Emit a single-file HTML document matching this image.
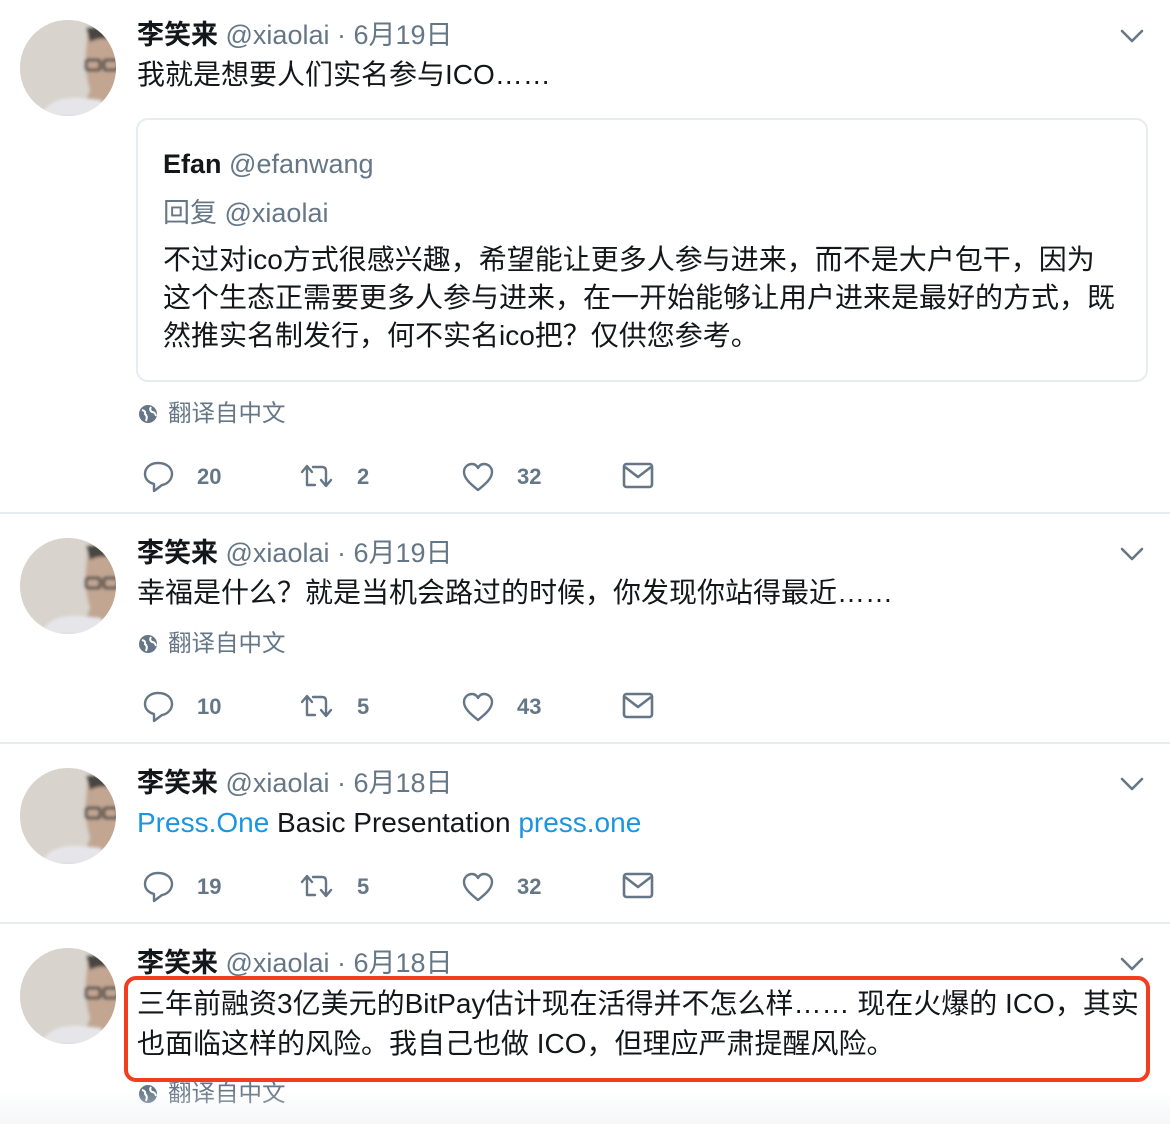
<!DOCTYPE html>
<html><head><meta charset="utf-8"><style>
*{margin:0;padding:0;box-sizing:border-box}
body{width:1170px;height:1124px;background:#fff;position:relative;overflow:hidden;font-family:"Liberation Sans","Noto Sans CJK SC",sans-serif;color:#14171a}
.a{position:absolute;white-space:nowrap}
.av{position:absolute;left:20px;width:96px;height:96px;border-radius:50%;overflow:hidden;background:#d9d4cd}
.hd{font-size:27px;line-height:30px}
.hd b{font-weight:bold;color:#14171a}
.hd span{color:#657786}
.tx{font-size:28px;line-height:38px}
.g{color:#657786}
.sep{position:absolute;left:0;width:1170px;height:2px;background:#e6ecf0}
.cnt{position:absolute;font-size:22px;font-weight:bold;color:#657786;line-height:24px}
.lnk{color:#1b95e0}
.tr{font-size:23.5px;line-height:30px}
</style></head><body>

<svg width="0" height="0" style="position:absolute"><defs>
<filter id="bl"><feGaussianBlur stdDeviation="1.5"/></filter>
<g id="face" filter="url(#bl)">
<rect width="96" height="96" fill="#d8d3cc"/>
<path d="M68 10 Q90 6 100 20 L100 96 L60 96 L70 70 Q64 50 66 30 Z" fill="#c2a692"/>
<path d="M66 8 Q86 4 100 14 L100 24 Q84 14 70 22 Z" fill="#4a4441"/>
<rect x="66" y="40" width="14" height="10" rx="2" fill="none" stroke="#4a4644" stroke-width="3"/>
<rect x="84" y="40" width="14" height="10" rx="2" fill="none" stroke="#4a4644" stroke-width="3"/>
<path d="M20 96 Q30 76 60 78 L80 80 L96 96 Z" fill="#e6e6ea"/>
</g>
<g id="globe"><circle cx="10" cy="10" r="9" fill="#657786"/><path d="M4 6 Q8 7 7 10 Q10 12 8 17 M13 3 Q11 6 14 8 Q17 8 18 12" stroke="#fff" stroke-width="2" fill="none"/></g>
<g id="reply"><path d="M16 3 C8 3 3 8 3 14 C3 20 8 23 12 24 L12 31 L20 25 C26 24 30 19 30 14 C30 8 25 3 16 3 Z" fill="none" stroke="#657786" stroke-width="2.4" stroke-linejoin="round"/></g>
<g id="rt"><path d="M7 26 L7 8 M2 13 L7 7 L12 13 M7 26 L15 26 M13 8 L22 8 Q26 8 26 12 L26 26 M21 21 L26 27 L31 21" fill="none" stroke="#657786" stroke-width="2.4" stroke-linecap="round" stroke-linejoin="round"/></g>
<g id="heart"><path d="M16 29 C10 24 2 18 2 11 C2 6 6 3 10 3 C13 3 15 5 16 7 C17 5 19 3 22 3 C26 3 30 6 30 11 C30 18 22 24 16 29 Z" fill="none" stroke="#657786" stroke-width="2.4" stroke-linejoin="round"/></g>
<g id="mail"><rect x="2" y="5" width="28" height="23" rx="2.5" fill="none" stroke="#657786" stroke-width="2.6"/><path d="M3 8 L16 18 L29 8" fill="none" stroke="#657786" stroke-width="2.6" stroke-linejoin="round"/></g>
<g id="chev"><path d="M2 2 L12 12 L22 2" fill="none" stroke="#657786" stroke-width="2.6" stroke-linecap="round" stroke-linejoin="round"/></g>
</defs></svg>

<!-- Tweet 1 -->
<div class="av" style="top:20px"><svg width="96" height="96"><use href="#face"/></svg></div>
<div class="a hd" style="left:137px;top:20px"><b>李笑来</b> <span>@xiaolai · 6月19日</span></div>
<svg class="a" style="left:1120px;top:29px" width="24" height="14"><use href="#chev"/></svg>
<div class="a tx" style="left:137px;top:56px">我就是想要人们实名参与ICO……</div>
<div class="a" style="left:136px;top:118px;width:1012px;height:264px;border:2px solid #e6ecf0;border-radius:12px"></div>
<div class="a hd" style="left:163px;top:149px"><b>Efan</b> <span>@efanwang</span></div>
<div class="a g" style="left:163px;top:194px;font-size:27px;line-height:38px">回复 @xiaolai</div>
<div class="a tx" style="left:163px;top:241px;line-height:38px">不过对ico方式很感兴趣，希望能让更多人参与进来，而不是大户包干，因为<br>这个生态正需要更多人参与进来，在一开始能够让用户进来是最好的方式，既<br>然推实名制发行，何不实名ico把？仅供您参考。</div>
<svg class="a" style="left:138px;top:404px" width="20" height="20"><use href="#globe"/></svg>
<div class="a g tr" style="left:168px;top:398px">翻译自中文</div>
<svg class="a" style="left:142px;top:460px" width="33" height="34"><use href="#reply"/></svg>
<div class="cnt" style="left:197px;top:465px">20</div>
<svg class="a" style="left:300px;top:459px" width="34" height="34"><use href="#rt"/></svg>
<div class="cnt" style="left:357px;top:465px">2</div>
<svg class="a" style="left:462px;top:461px" width="32" height="32"><use href="#heart"/></svg>
<div class="cnt" style="left:517px;top:465px">32</div>
<svg class="a" style="left:622px;top:459px" width="32" height="32"><use href="#mail"/></svg>
<div class="sep" style="top:512px"></div>

<!-- Tweet 2 -->
<div class="av" style="top:538px"><svg width="96" height="96"><use href="#face"/></svg></div>
<div class="a hd" style="left:137px;top:538px"><b>李笑来</b> <span>@xiaolai · 6月19日</span></div>
<svg class="a" style="left:1120px;top:547px" width="24" height="14"><use href="#chev"/></svg>
<div class="a tx" style="left:137px;top:574px">幸福是什么？就是当机会路过的时候，你发现你站得最近……</div>
<svg class="a" style="left:138px;top:634px" width="20" height="20"><use href="#globe"/></svg>
<div class="a g tr" style="left:168px;top:628px">翻译自中文</div>
<svg class="a" style="left:142px;top:690px" width="33" height="34"><use href="#reply"/></svg>
<div class="cnt" style="left:197px;top:695px">10</div>
<svg class="a" style="left:300px;top:689px" width="34" height="34"><use href="#rt"/></svg>
<div class="cnt" style="left:357px;top:695px">5</div>
<svg class="a" style="left:462px;top:691px" width="32" height="32"><use href="#heart"/></svg>
<div class="cnt" style="left:517px;top:695px">43</div>
<svg class="a" style="left:622px;top:689px" width="32" height="32"><use href="#mail"/></svg>
<div class="sep" style="top:742px"></div>

<!-- Tweet 3 -->
<div class="av" style="top:768px"><svg width="96" height="96"><use href="#face"/></svg></div>
<div class="a hd" style="left:137px;top:768px"><b>李笑来</b> <span>@xiaolai · 6月18日</span></div>
<svg class="a" style="left:1120px;top:777px" width="24" height="14"><use href="#chev"/></svg>
<div class="a tx" style="left:137px;top:804px"><span class="lnk">Press.One</span> Basic Presentation <span class="lnk">press.one</span></div>
<svg class="a" style="left:142px;top:870px" width="33" height="34"><use href="#reply"/></svg>
<div class="cnt" style="left:197px;top:875px">19</div>
<svg class="a" style="left:300px;top:869px" width="34" height="34"><use href="#rt"/></svg>
<div class="cnt" style="left:357px;top:875px">5</div>
<svg class="a" style="left:462px;top:871px" width="32" height="32"><use href="#heart"/></svg>
<div class="cnt" style="left:517px;top:875px">32</div>
<svg class="a" style="left:622px;top:869px" width="32" height="32"><use href="#mail"/></svg>
<div class="sep" style="top:922px"></div>

<!-- Tweet 4 -->
<div class="av" style="top:948px"><svg width="96" height="96"><use href="#face"/></svg></div>
<div class="a hd" style="left:137px;top:948px"><b>李笑来</b> <span>@xiaolai · 6月18日</span></div>
<svg class="a" style="left:1120px;top:957px" width="24" height="14"><use href="#chev"/></svg>
<div class="a tx" style="left:137px;top:984px;line-height:40px">三年前融资3亿美元的BitPay估计现在活得并不怎么样…… 现在火爆的 ICO，其实<br>也面临这样的风险。我自己也做 ICO，但理应严肃提醒风险。</div>
<div class="a" style="left:124px;top:976px;width:1026px;height:106px;border:4px solid #f23d1f;border-radius:12px"></div>
<svg class="a" style="left:138px;top:1084px" width="20" height="20"><use href="#globe"/></svg>
<div class="a g tr" style="left:168px;top:1078px">翻译自中文</div>
<div class="a" style="left:0;top:1090px;width:1170px;height:34px;background:linear-gradient(rgba(245,248,250,0),rgba(240,243,245,0.7))"></div>
</body></html>
